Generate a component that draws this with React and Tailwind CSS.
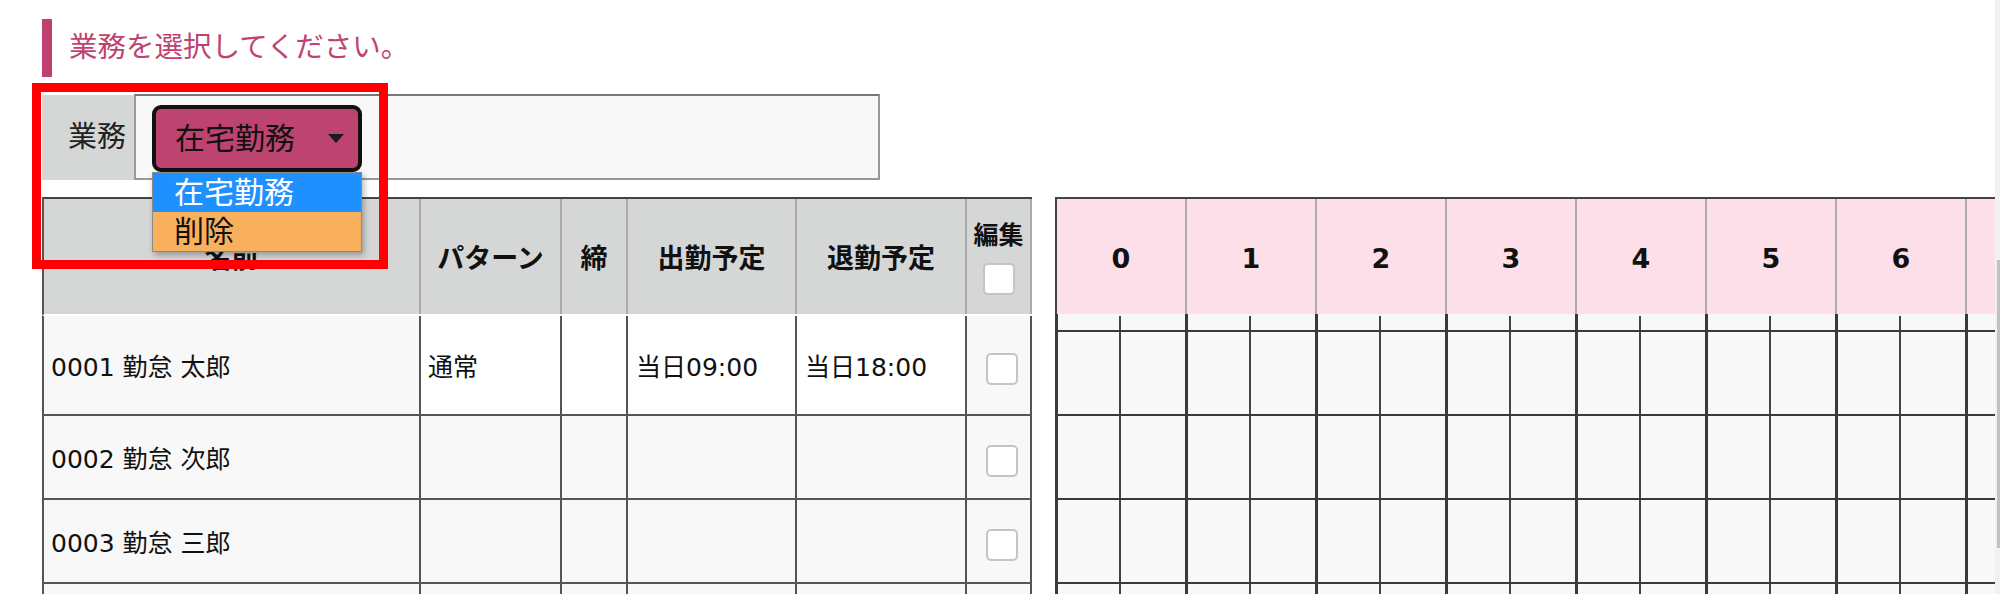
import React from "react";

const FONT = "font-['DejaVu_Sans','Noto_Sans_CJK_JP',sans-serif]";

function Checkbox() {
  return <div className="w-[32px] h-[32px] rounded-[5px] border-2 border-[#c4c4c4] bg-white shrink-0" />;
}

const leftCols = [
  { key: "name", w: "w-[377px]", label: "名前" },
  { key: "pattern", w: "w-[141px]", label: "パターン" },
  { key: "shime", w: "w-[66px]", label: "締" },
  { key: "start", w: "w-[169px]", label: "出勤予定" },
  { key: "end", w: "w-[170px]", label: "退勤予定" },
];

const rows = [
  { name: "0001 勤怠 太郎", pattern: "通常", start: "当日09:00", end: "当日18:00", h: "h-[100px]", first: true },
  { name: "0002 勤怠 次郎", pattern: "", start: "", end: "", h: "h-[84px]" },
  { name: "0003 勤怠 三郎", pattern: "", start: "", end: "", h: "h-[84px]" },
  { name: "", pattern: "", start: "", end: "", h: "h-[84px]" },
];

const hours = ["0", "1", "2", "3", "4", "5", "6", ""];

function LeftTable() {
  return (
    <div className="w-[990px] shrink-0 flex flex-col">
      {/* header */}
      <div className="flex h-[119px] border-t-2 border-l-2 border-b-2 border-t-[#444] border-l-[#555] border-b-white bg-[#d5d7d6]">
        {leftCols.map((c) => (
          <div
            key={c.key}
            className={`${c.w} shrink-0 border-r-2 border-[#aaa] flex items-center justify-center pt-[6px] text-[27px] font-bold text-[#111]`}
          >
            {c.label}
          </div>
        ))}
        <div className="w-[65px] shrink-0 border-r-2 border-[#aaa] flex flex-col items-center pt-[22px]">
          <div className="text-[25px] leading-[30px] font-bold text-[#111]">編集</div>
          <div className="mt-[12px]">
            <Checkbox />
          </div>
        </div>
      </div>
      {/* body */}
      {rows.map((r, i) => {
        const bg = r.first ? "bg-white" : "bg-[#f8f8f8]";
        return (
          <div key={i} className={`flex ${r.h} border-l-2 border-[#555] shrink-0`}>
            <div className="w-[377px] shrink-0 border-r-2 border-b-2 border-[#555] bg-[#f8f8f8] flex items-center pl-[7px] pt-[6px] text-[25px] text-[#111]">
              {r.name}
            </div>
            <div className={`w-[141px] shrink-0 border-r-2 border-b-2 border-[#555] ${bg} flex items-center pl-[7px] pt-[6px] text-[25px] text-[#111]`}>
              {r.pattern}
            </div>
            <div className={`w-[66px] shrink-0 border-r-2 border-b-2 border-[#555] ${bg}`} />
            <div className={`w-[169px] shrink-0 border-r-2 border-b-2 border-[#555] ${bg} flex items-center pl-[8px] pt-[6px] text-[25px] text-[#111]`}>
              {r.start}
            </div>
            <div className={`w-[170px] shrink-0 border-r-2 border-b-2 border-[#555] ${bg} flex items-center pl-[8px] pt-[6px] text-[25px] text-[#111]`}>
              {r.end}
            </div>
            <div className="w-[65px] shrink-0 border-r-2 border-b-2 border-[#555] bg-[#f8f8f8] flex items-center justify-center pl-[6px] pt-[8px]">
              {i < 3 ? <Checkbox /> : null}
            </div>
          </div>
        );
      })}
    </div>
  );
}

function HourCell({ tick }) {
  return (
    <div className="w-[130px] shrink-0 flex border-r-[3px] border-[#3a3a3a]">
      <div className="w-[63px] shrink-0 flex justify-end">
        <div className={`w-[2px] bg-[#444] ${tick ? "mt-[2px]" : ""}`} />
      </div>
      <div className="flex-1" />
    </div>
  );
}

function RightGrid() {
  return (
    <div className="w-[940px] shrink-0 overflow-hidden">
      <div className="w-[1050px] flex flex-col">
        <div className="flex h-[117px] border-t-2 border-l-2 border-[#444] bg-[#fcdfe9]">
          {hours.map((h, i) => (
            <div
              key={i}
              className="w-[130px] shrink-0 border-r-2 border-[#aaa] flex items-center justify-center pt-[6px] text-[27px] font-bold text-[#111]"
            >
              {h}
            </div>
          ))}
        </div>
        <div className="flex h-[18px] border-l-[3px] border-b-2 border-[#3a3a3a] bg-[#f8f8f8]">
          {hours.map((h, i) => (
            <HourCell key={i} tick />
          ))}
        </div>
        {[0, 1, 2, 3].map((r) => (
          <div key={r} className="flex h-[84px] shrink-0 border-l-[3px] border-b-2 border-[#3a3a3a] bg-[#f8f8f8]">
            {hours.map((h, i) => (
              <HourCell key={i} />
            ))}
          </div>
        ))}
      </div>
    </div>
  );
}

export default function App() {
  return (
    <div className={`relative w-[2000px] h-[594px] overflow-hidden bg-white flex ${FONT}`}>
      <div className="w-[1995px] shrink-0 pl-[42px] flex flex-col">
        {/* title */}
        <div className="flex items-center pt-[19px]">
          <div className="w-[10px] h-[58px] bg-[#bf4070]" />
          <div className="ml-[17px] text-[28.5px] text-[#c0436f]">業務を選択してください。</div>
        </div>
        {/* filter */}
        <div className="flex mt-[17px] h-[88px]">
          <div className="w-[92px] shrink-0 mt-[1px] h-[85px] bg-[#d5d7d6] flex items-center pl-[26px] text-[29px] text-[#222]">
            業務
          </div>
          <div className="w-[746px] shrink-0 border-2 border-[#999] border-t-[#777] bg-[#f8f8f8] pl-[16px] pt-[9px]">
            <div className="relative w-[210px]">
              <div className="h-[67px] border-[4px] border-[#111] rounded-[9px] bg-[#bd4470] flex items-center pl-[19px] pr-[14px] text-[30px] text-[#111]">
                <span className="flex-1">在宅勤務</span>
                <svg width="16" height="9" viewBox="0 0 16 9" className="shrink-0">
                  <path d="M0 0 L16 0 L8 9 Z" fill="#1a1a1a" />
                </svg>
              </div>
              <div className="absolute left-0 top-full z-10 w-[210px] border border-[#8a8a8a] shadow-[2px_3px_6px_rgba(0,0,0,0.3)] text-[30px]">
                <div className="h-[39px] bg-[#1e90ff] text-white flex items-center pl-[21px]">在宅勤務</div>
                <div className="h-[39px] bg-[#f8b05d] text-[#111] flex items-center pl-[21px]">削除</div>
              </div>
            </div>
          </div>
        </div>
        {/* tables */}
        <div className="flex mt-[17px] gap-[23px]">
          <LeftTable />
          <RightGrid />
        </div>
      </div>
      {/* scrollbar */}
      <div className="w-[5px] shrink-0 bg-[#f1f1f1] flex justify-end">
        <div className="w-[3px] h-[288px] mt-[260px] bg-[#c1c1c1]" />
      </div>
      {/* red annotation frame */}
      <div className="absolute left-[32px] top-[83px] w-[356px] h-[186px] border-[9px] border-[#ff0000] z-20 pointer-events-none" />
    </div>
  );
}
